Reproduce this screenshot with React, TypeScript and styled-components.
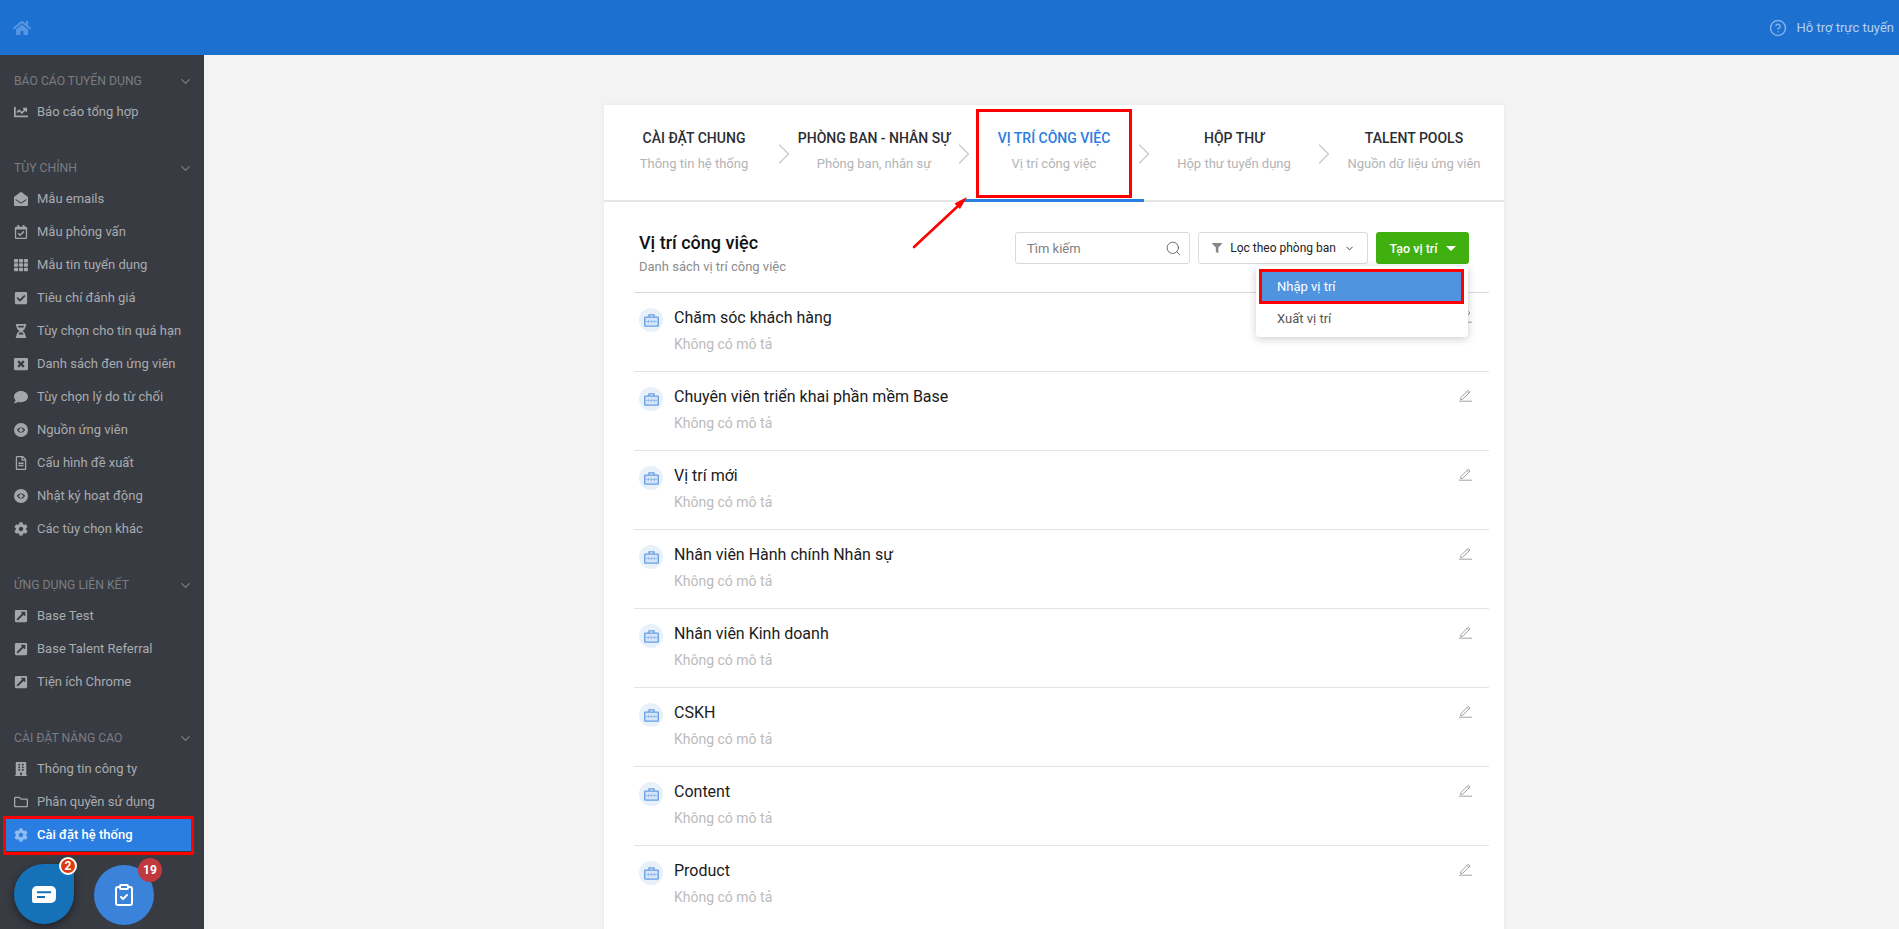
import React from 'react';
import styled, { createGlobalStyle } from 'styled-components';
import {
  FaHome, FaChartLine, FaEnvelopeOpen, FaRegCalendarCheck, FaTh, FaCheckSquare, FaHourglassHalf,
  FaWindowClose, FaComment, FaRegFileAlt, FaCog, FaExternalLinkSquareAlt, FaBuilding, FaRegFolder, FaFilter,
} from 'react-icons/fa';
import { ChevronDown, ChevronRight, Search, CircleHelp, ClipboardCheck } from 'lucide-react';

const Global = createGlobalStyle`
  html, body { margin: 0; padding: 0; height: 100%; overflow: hidden; background: #f3f3f3; }
  body { font-family: Roboto, "Noto Sans", sans-serif; }
  * { box-sizing: border-box; }
`;

const Page = styled.div`
  position: relative;
  width: 1899px;
  height: 929px;
  overflow: hidden;
  display: grid;
  grid-template-rows: 55px 1fr;
  grid-template-columns: 204px 1fr;
`;

const TopBar = styled.header`
  grid-column: 1 / 3;
  background: #1c70d0;
  display: flex;
  align-items: center;
  justify-content: space-between;
  padding: 0 5px 0 13px;
`;

const HomeIcon = styled(FaHome)`
  width: 18px;
  height: 18px;
  color: #5695e2;
`;

const Help = styled.div`
  display: flex;
  align-items: center;
  gap: 10px;
  color: #b5d0f0;
  font-size: 13px;
`;

const Sidebar = styled.aside`
  background: #383b42;
  padding: 16px 0 0;
  position: relative;
`;

const Group = styled.div`
  margin-bottom: 30px;
`;

const GroupHead = styled.div`
  height: 20px;
  padding: 0 11px 0 14px;
  display: flex;
  align-items: center;
  justify-content: space-between;
  color: #7b7d82;
  font-size: 12.2px;
  text-transform: uppercase;
  margin-bottom: 4px;
`;

const Item = styled.div<{ $active?: boolean }>`
  height: 33px;
  margin: ${p => (p.$active ? '0 13px 0 5px' : '0')};
  padding: 0 0 0 ${p => (p.$active ? '9px' : '14px')};
  display: flex;
  align-items: center;
  gap: 9px;
  font-size: 13px;
  color: ${p => (p.$active ? '#fff' : '#a9abae')};
  font-weight: ${p => (p.$active ? 500 : 400)};
  background: ${p => (p.$active ? '#2a7de1' : 'transparent')};
`;

const IconSlot = styled.span<{ $active?: boolean }>`
  width: 14px;
  height: 14px;
  flex: none;
  display: flex;
  align-items: center;
  justify-content: center;
  color: ${p => (p.$active ? '#8fbcf2' : '#a5a6a9')};
`;

const Bubble = styled.div<{ $x: number; $y: number; $bg: string; $square?: boolean }>`
  position: absolute;
  left: ${p => p.$x}px;
  top: ${p => p.$y}px;
  width: 60px;
  height: 60px;
  border-radius: ${p => (p.$square ? '50% 10px 50% 50%' : '50%')};
  background: ${p => p.$bg};
  box-shadow: ${p => (p.$square ? '0 3px 8px rgba(0,0,0,.45)' : 'none')};
  display: flex;
  align-items: center;
  justify-content: center;
  color: #fff;
`;

const Badge = styled.span<{ $bg: string; $ring?: boolean; $size: number; $r: number; $t: number }>`
  position: absolute;
  right: ${p => p.$r}px;
  top: ${p => p.$t}px;
  width: ${p => p.$size}px;
  height: ${p => p.$size}px;
  border-radius: 50%;
  background: ${p => p.$bg};
  border: ${p => (p.$ring ? '2px solid #fff' : 'none')};
  color: #fff;
  font-size: 12px;
  font-weight: 700;
  display: flex;
  align-items: center;
  justify-content: center;
`;

const Main = styled.main`
  padding: 50px 0 0 400px;
`;

const Card = styled.section`
  width: 900px;
  background: #fff;
  box-shadow: 0 0 4px rgba(0, 0, 0, 0.06);
  height: 900px;
`;

const Tabs = styled.nav`
  display: grid;
  grid-template-columns: repeat(5, 1fr);
  height: 97px;
  border-bottom: 2px solid #e4e5e7;
`;

const Tab = styled.div<{ $active?: boolean }>`
  position: relative;
  height: 97px;
  padding-top: 23px;
  text-align: center;
  border-bottom: 3px solid ${p => (p.$active ? '#2a7de1' : 'transparent')};
`;

const TabTitle = styled.div<{ $active?: boolean }>`
  font-size: 14px;
  line-height: 20px;
  font-weight: 500;
  color: ${p => (p.$active ? '#2a7de1' : '#2b2e33')};
`;

const TabSub = styled.div`
  margin-top: 6px;
  font-size: 13px;
  line-height: 20px;
  color: #b3b4b6;
`;

const TabArrow = styled(ChevronRight)`
  position: absolute;
  right: -18px;
  top: 31px;
  color: #ccc;
`;

const Content = styled.div`
  padding: 0 15px 0 30px;
`;

const Head = styled.div`
  display: flex;
  justify-content: space-between;
  padding: 29px 20px 0 5px;
  height: 91px;
  border-bottom: 1px solid #d9d9d9;
`;

const PageTitle = styled.h2`
  margin: 0;
  font-size: 18px;
  line-height: 24px;
  font-weight: 500;
  color: #111;
`;

const PageSub = styled.div`
  margin-top: 2px;
  font-size: 13px;
  line-height: 20px;
  color: #8a8c90;
`;

const Tools = styled.div`
  display: flex;
  gap: 8px;
  height: 32px;
  margin-top: 1px;
`;

const SearchBox = styled.div`
  width: 175px;
  border: 1px solid #dadada;
  border-radius: 3px;
  display: flex;
  align-items: center;
  justify-content: space-between;
  padding: 0 7px 0 11px;
  font-size: 13px;
  color: #808080;
`;

const FilterBtn = styled.div`
  width: 170px;
  border: 1px solid #dadada;
  border-radius: 3px;
  display: flex;
  align-items: center;
  gap: 8px;
  padding: 0 12px 0 13px;
  font-size: 12px;
  color: #222;
  white-space: nowrap;
  & > svg:last-child { margin-left: auto; }
`;

const CreateBtn = styled.div`
  width: 93px;
  background: #40b010;
  border-radius: 3px;
  color: #fff;
  font-size: 12.5px;
  font-weight: 500;
  display: flex;
  align-items: center;
  justify-content: center;
  gap: 8px;
`;

const Caret = styled.span`
  width: 0;
  height: 0;
  border-left: 5px solid transparent;
  border-right: 5px solid transparent;
  border-top: 5px solid #fff;
`;

const Row = styled.div`
  height: 79px;
  border-bottom: 1px solid #e4e4e4;
  display: flex;
  padding: 15px 16px 0 5px;
  gap: 11px;
  &:last-child { border-bottom: none; }
`;

const IconCircle = styled.span`
  width: 24px;
  height: 24px;
  border-radius: 50%;
  background: #e8f0fa;
  display: flex;
  align-items: center;
  justify-content: center;
  flex: none;
`;

const RowBody = styled.div`
  flex: 1;
`;

const RowTitle = styled.div`
  font-size: 16px;
  line-height: 20px;
  color: #1b1b1b;
`;

const RowDesc = styled.div`
  margin-top: 6px;
  font-size: 14px;
  line-height: 20px;
  color: #bbbbbb;
`;

const Menu = styled.div`
  position: absolute;
  left: 1256px;
  top: 266px;
  width: 212px;
  height: 71px;
  background: #fff;
  border-radius: 4px;
  box-shadow: 0 2px 8px rgba(0, 0, 0, 0.2);
  padding-top: 4px;
`;

const MenuItem = styled.div<{ $active?: boolean }>`
  height: 32px;
  margin: ${p => (p.$active ? '0 4px' : '0')};
  padding: 0 ${p => (p.$active ? '17px' : '21px')};
  display: flex;
  align-items: center;
  font-size: 13px;
  color: ${p => (p.$active ? '#fff' : '#555')};
  background: ${p => (p.$active ? '#5094e0' : '#fff')};
`;

const RedBox = styled.div<{ $x: number; $y: number; $w: number; $h: number }>`
  position: absolute;
  left: ${p => p.$x}px;
  top: ${p => p.$y}px;
  width: ${p => p.$w}px;
  height: ${p => p.$h}px;
  border: 3px solid #f00;
  pointer-events: none;
`;

const ArrowMark = styled.svg`
  position: absolute;
  left: 906px;
  top: 190px;
`;

const Link = () => (
  <svg width="14" height="14" viewBox="0 0 14 14">
    <circle cx="7" cy="7" r="7" fill="currentColor" />
    <path d="M5.6 4.6 3.2 7l2.4 2.4M8.4 4.6 10.8 7 8.4 9.4M6.6 9.4 4.2 7l2.4-2.4M7.4 4.6 9.8 7 7.4 9.4" fill="none" stroke="#383b42" strokeWidth="1" />
  </svg>
);

const Briefcase = () => (
  <svg width="15" height="13" viewBox="0 0 15 13" fill="none">
    <rect x=".7" y="3.2" width="13.6" height="9" rx=".6" fill="#d5e4f6" stroke="#659ee2" strokeWidth="1.3" />
    <path d="M5 3V.8h5V3" stroke="#659ee2" strokeWidth="1.3" />
    <path d="M1 7.5h13" stroke="#9fc2ec" strokeWidth="1" />
    <path d="M4.5 6.2v2.6M7.5 6.2v2.6M10.5 6.2v2.6" stroke="#8fb7e8" strokeWidth="1" />
  </svg>
);

const Pencil = () => (
  <svg width="15" height="15" viewBox="0 0 15 15" fill="none" stroke="#a3a3a3" strokeWidth="1">
    <path d="M3 10.5 10.2 3.2l1.8 1.8-7.3 7.2-2.2.4zM9 4.5l1.7 1.7M1 14.2h13" />
  </svg>
);

const ChatGlyph = () => (
  <svg width="24" height="17" viewBox="0 0 24 17">
    <path d="M5 0h14a5 5 0 0 1 5 5v7a5 5 0 0 1-5 5H2a2 2 0 0 1-2-2V5a5 5 0 0 1 5-5z" fill="#fff" />
    <path d="M5 6.2h14M5 11h8" stroke="#1572b8" strokeWidth="2" />
  </svg>
);

type Entry = { label: string; icon: React.ReactNode; active?: boolean };
const s = { size: 14 };
const groups: { title: string; items: Entry[] }[] = [
  { title: 'Báo cáo tuyển dụng', items: [{ label: 'Báo cáo tổng hợp', icon: <FaChartLine {...s} /> }] },
  {
    title: 'Tùy chỉnh',
    items: [
      { label: 'Mẫu emails', icon: <FaEnvelopeOpen {...s} /> },
      { label: 'Mẫu phỏng vấn', icon: <FaRegCalendarCheck {...s} /> },
      { label: 'Mẫu tin tuyển dụng', icon: <FaTh {...s} /> },
      { label: 'Tiêu chí đánh giá', icon: <FaCheckSquare {...s} /> },
      { label: 'Tùy chọn cho tin quá hạn', icon: <FaHourglassHalf {...s} /> },
      { label: 'Danh sách đen ứng viên', icon: <FaWindowClose {...s} /> },
      { label: 'Tùy chọn lý do từ chối', icon: <FaComment {...s} /> },
      { label: 'Nguồn ứng viên', icon: <Link /> },
      { label: 'Cấu hình đề xuất', icon: <FaRegFileAlt {...s} /> },
      { label: 'Nhật ký hoạt động', icon: <Link /> },
      { label: 'Các tùy chọn khác', icon: <FaCog {...s} /> },
    ],
  },
  {
    title: 'Ứng dụng liên kết',
    items: [
      { label: 'Base Test', icon: <FaExternalLinkSquareAlt {...s} /> },
      { label: 'Base Talent Referral', icon: <FaExternalLinkSquareAlt {...s} /> },
      { label: 'Tiện ích Chrome', icon: <FaExternalLinkSquareAlt {...s} /> },
    ],
  },
  {
    title: 'Cài đặt nâng cao',
    items: [
      { label: 'Thông tin công ty', icon: <FaBuilding {...s} /> },
      { label: 'Phân quyền sử dụng', icon: <FaRegFolder {...s} /> },
      { label: 'Cài đặt hệ thống', icon: <FaCog {...s} />, active: true },
    ],
  },
];

const tabs = [
  ['Cài đặt chung', 'Thông tin hệ thống'],
  ['Phòng ban - Nhân sự', 'Phòng ban, nhân sự'],
  ['Vị trí công việc', 'Vị trí công việc'],
  ['Hộp thư', 'Hộp thư tuyển dụng'],
  ['Talent Pools', 'Nguồn dữ liệu ứng viên'],
];

const rows = [
  'Chăm sóc khách hàng',
  'Chuyên viên triển khai phần mềm Base',
  'Vị trí mới',
  'Nhân viên Hành chính Nhân sự',
  'Nhân viên Kinh doanh',
  'CSKH',
  'Content',
  'Product',
];

export default function App() {
  return (
    <Page>
      <Global />
      <TopBar>
        <HomeIcon />
        <Help>
          <CircleHelp size={18} color="#7fb0ea" />
          Hỗ trợ trực tuyến
        </Help>
      </TopBar>
      <Sidebar>
        {groups.map(g => (
          <Group key={g.title}>
            <GroupHead>
              {g.title}
              <ChevronDown size={15} color="#7b7d82" />
            </GroupHead>
            {g.items.map(i => (
              <Item key={i.label} $active={i.active}>
                <IconSlot $active={i.active}>{i.icon}</IconSlot>
                {i.label}
              </Item>
            ))}
          </Group>
        ))}
      </Sidebar>
      <Main>
        <Card>
          <Tabs>
            {tabs.map(([t, sub], idx) => (
              <Tab key={t} $active={idx === 2}>
                <TabTitle $active={idx === 2}>{t.toUpperCase()}</TabTitle>
                <TabSub>{sub}</TabSub>
                {idx < 4 && <TabArrow size={36} strokeWidth={0.9} />}
              </Tab>
            ))}
          </Tabs>
          <Content>
            <Head>
              <div>
                <PageTitle>Vị trí công việc</PageTitle>
                <PageSub>Danh sách vị trí công việc</PageSub>
              </div>
              <Tools>
                <SearchBox>
                  Tìm kiếm
                  <Search size={17} strokeWidth={1.2} color="#555" />
                </SearchBox>
                <FilterBtn>
                  <FaFilter size={12} color="#888" />
                  Lọc theo phòng ban
                  <ChevronDown size={13} color="#333" />
                </FilterBtn>
                <CreateBtn>
                  Tạo vị trí
                  <Caret />
                </CreateBtn>
              </Tools>
            </Head>
            {rows.map(r => (
              <Row key={r}>
                <IconCircle>
                  <Briefcase />
                </IconCircle>
                <RowBody>
                  <RowTitle>{r}</RowTitle>
                  <RowDesc>Không có mô tả</RowDesc>
                </RowBody>
                <Pencil />
              </Row>
            ))}
          </Content>
        </Card>
      </Main>
      <Menu>
        <MenuItem $active>Nhập vị trí</MenuItem>
        <MenuItem>Xuất vị trí</MenuItem>
      </Menu>
      <Bubble $x={14} $y={864} $bg="#1572b8" $square>
        <ChatGlyph />
        <Badge $bg="#dd3a10" $ring $size={18} $r={-3} $t={-7}>2</Badge>
      </Bubble>
      <Bubble $x={94} $y={865} $bg="#3a82da">
        <ClipboardCheck size={24} />
        <Badge $bg="#c0393f" $size={24} $r={-8} $t={-7}>19</Badge>
      </Bubble>
      <RedBox $x={3} $y={816} $w={191} $h={39} />
      <RedBox $x={976} $y={109} $w={156} $h={89} />
      <RedBox $x={1259} $y={269} $w={205} $h={35} />
      <ArrowMark width="90" height="70" viewBox="0 0 90 70">
        <path d="M8 57 52 16" stroke="#f00" strokeWidth="2.6" strokeLinecap="round" />
        <path d="M61 7 48.5 13.5 54 19z" fill="#f00" />
      </ArrowMark>
    </Page>
  );
}
